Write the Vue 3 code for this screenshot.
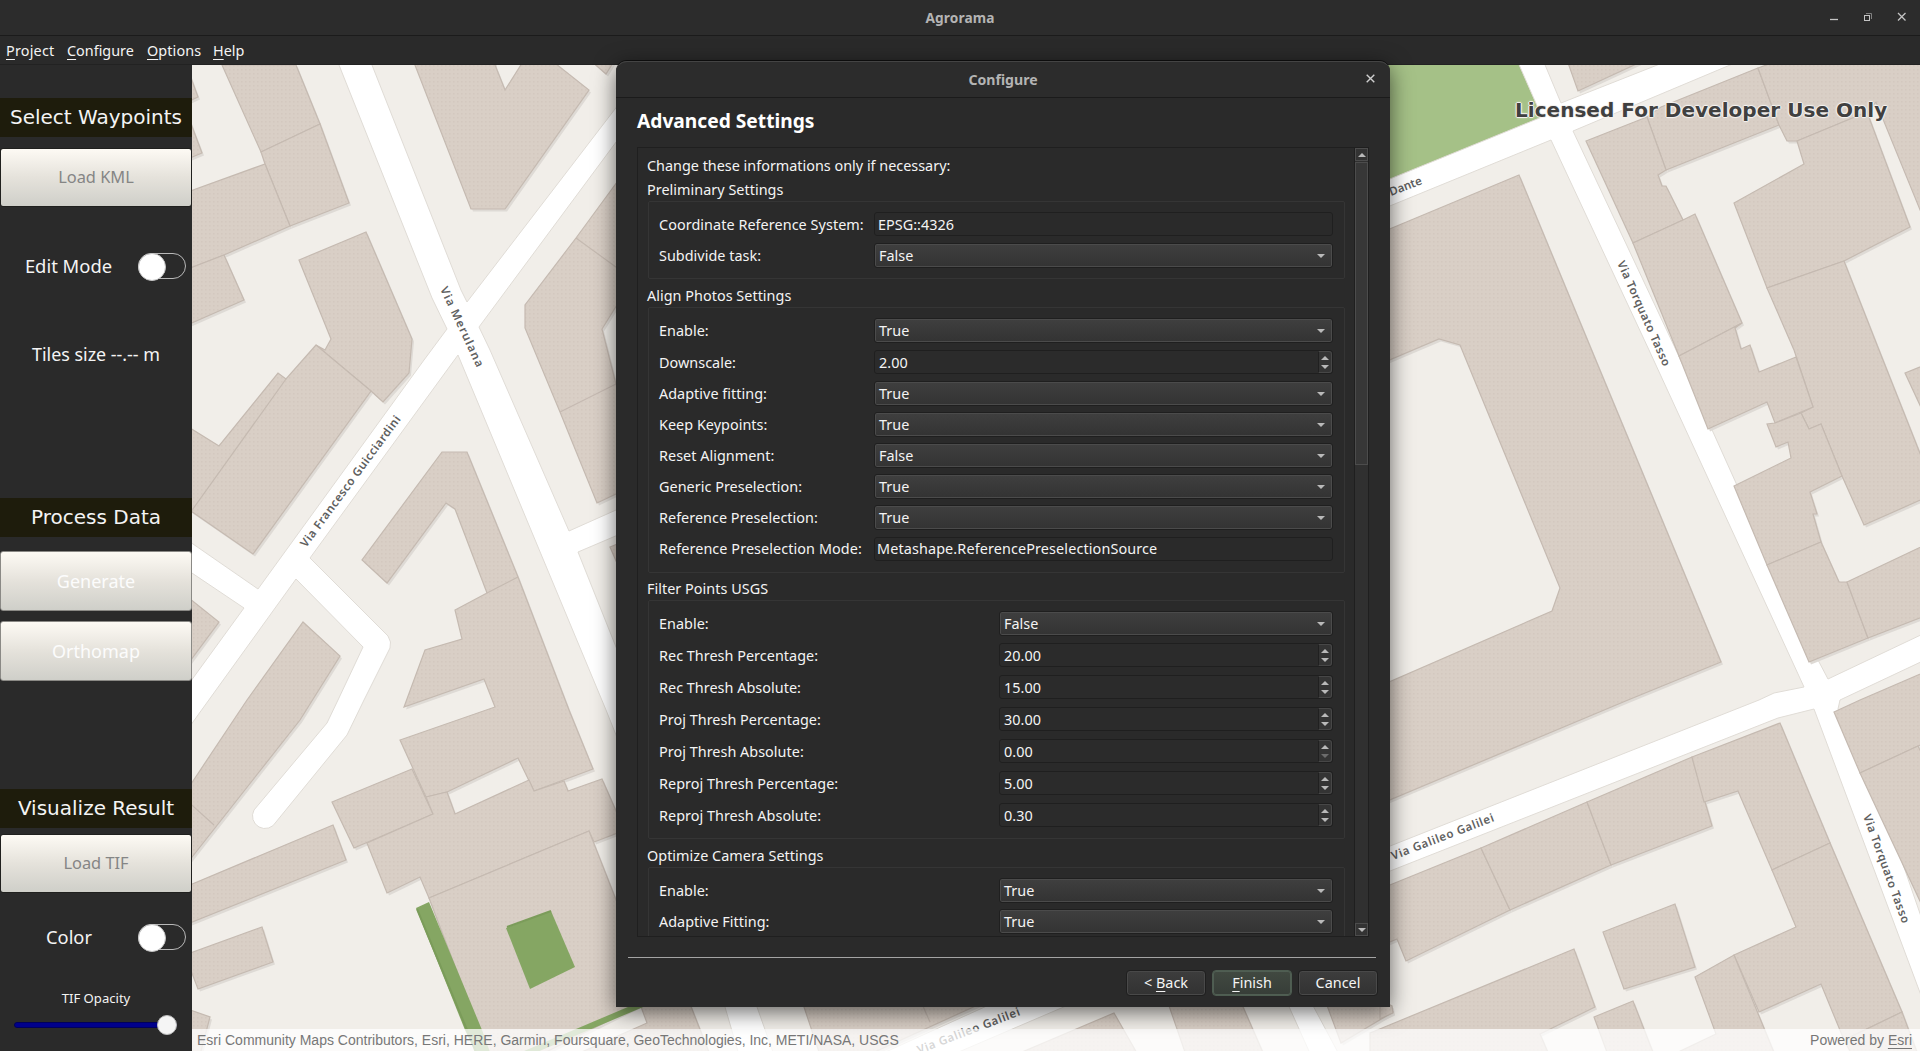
<script setup>
const menus = ['Project', 'Configure', 'Options', 'Help']

const groups = [
  {
    title: 'Preliminary Settings',
    cls: 'prelim',
    rows: [
      { label: 'Coordinate Reference System:', type: 'edit', value: 'EPSG::4326' },
      { label: 'Subdivide task:', type: 'combo', value: 'False' }
    ]
  },
  {
    title: 'Align Photos Settings',
    cls: 'align',
    rows: [
      { label: 'Enable:', type: 'combo', value: 'True' },
      { label: 'Downscale:', type: 'spin', value: '2.00' },
      { label: 'Adaptive fitting:', type: 'combo', value: 'True' },
      { label: 'Keep Keypoints:', type: 'combo', value: 'True' },
      { label: 'Reset Alignment:', type: 'combo', value: 'False' },
      { label: 'Generic Preselection:', type: 'combo', value: 'True' },
      { label: 'Reference Preselection:', type: 'combo', value: 'True' },
      { label: 'Reference Preselection Mode:', type: 'edit', value: 'Metashape.ReferencePreselectionSource' }
    ]
  },
  {
    title: 'Filter Points USGS',
    cls: 'filter',
    rows: [
      { label: 'Enable:', type: 'combo', value: 'False' },
      { label: 'Rec Thresh Percentage:', type: 'spin', value: '20.00' },
      { label: 'Rec Thresh Absolute:', type: 'spin', value: '15.00' },
      { label: 'Proj Thresh Percentage:', type: 'spin', value: '30.00' },
      { label: 'Proj Thresh Absolute:', type: 'spin', value: '0.00', atMin: true },
      { label: 'Reproj Thresh Percentage:', type: 'spin', value: '5.00' },
      { label: 'Reproj Thresh Absolute:', type: 'spin', value: '0.30' }
    ]
  },
  {
    title: 'Optimize Camera Settings',
    cls: 'optimize',
    rows: [
      { label: 'Enable:', type: 'combo', value: 'True' },
      { label: 'Adaptive Fitting:', type: 'combo', value: 'True' }
    ]
  }
]

const buildings = [
  '222,65 296,65 320,124 261,152',
  '320,124 349,203 290,226 265,164 261,152',
  '185,193 265,164 290,226 224,255 185,270',
  '185,270 224,255 244,300 185,326',
  '185,62 198,97 185,103',
  '185,108 202,153 185,160',
  '413,60 495,60 495,65 505,90 524,60 551,60 589,90 505,209 471,209',
  '590,60 606,74 616,58',
  '366,232 412,339 409,373 383,402 371,391 316,345 325,350 331,339 299,260',
  '316,345 286,379 278,373 219,446 185,425 185,507 253,554 371,391',
  '620,178 576,238 525,305 525,328 560,412 597,503 620,492 620,400 602,329 620,300',
  '442,452 467,452 518,577 569,710 593,769 534,791 518,758 447,792 426,797 400,740 495,707 484,679 404,707 425,650 462,639 455,610 487,593 455,509 446,503 387,583 362,560',
  '610,547 620,543 620,570',
  '185,595 219,622 185,668',
  '303,622 340,656 300,720 185,866 185,793 247,700',
  '333,825 346,860 185,925 185,887',
  '262,927 273,962 198,989 185,955',
  '185,1008 210,1017 200,1055 185,1055',
  '412,769 433,814 354,848 332,802',
  '426,797 447,792 455,814 529,780 534,791 564,781 568,791 602,779 620,820 620,832 594,842 589,831 429,898 420,877 387,893 367,843 433,814',
  '429,898 589,831 620,910 650,1000 540,1055 489,1055',
  '640,1004 647,1023 575,1055 710,1055 690,1004',
  '803,1004 820,1055 868,1055 980,1004',
  '1114,1013 1138,1055 1015,1055',
  '1167,1000 1240,1000 1264,1055 1186,1055',
  '1325,1000 1380,1000 1393,1012 1341,1043',
  '1567,60 1578,91 1645,60',
  '1661,107 1758,68 1779,125 1666,170 1647,117',
  '1586,141 1647,117 1666,170 1658,175 1662,186 1666,186 1683,220 1633,243',
  '1633,243 1683,220 1695,214 1742,323 1679,356',
  '1758,68 1780,60 1925,60 1925,222 1876,102 1867,112 1797,141 1787,141 1779,125',
  '1797,141 1867,112 1910,227 1844,261 1767,288 1734,203 1804,164',
  '1767,288 1844,261 1879,350 1925,466 1925,498 1864,525 1842,476 1821,424 1809,429 1801,413 1813,407 1794,350',
  '1679,356 1742,323 1735,328 1741,349 1750,345 1759,372 1796,357 1813,407 1775,423 1767,402 1708,429',
  '1801,413 1809,429 1821,424 1842,476 1810,492 1817,514 1813,514 1821,542 1767,565 1734,486 1791,458 1788,442 1776,447 1767,424 1775,423',
  '1767,565 1821,542 1839,582 1847,582 1868,638 1809,662',
  '1847,582 1925,545 1925,616 1868,638',
  '1905,373 1925,365 1925,416',
  '1380,233 1519,175 1721,662 1628,700 1380,804 1380,686 1552,611 1560,588 1460,345 1439,339 1380,364',
  '1380,889 1481,848 1510,910 1406,961 1397,939 1380,946',
  '1481,848 1587,802 1611,865 1510,910',
  '1587,802 1692,757 1712,826 1611,865',
  '1692,757 1780,723 1830,843 1772,870 1738,791 1704,802',
  '1830,843 1902,1012 1844,1040 1821,984 1759,1012 1734,955 1796,927 1772,870',
  '1695,977 1734,955 1775,1055 1672,1055 1716,1034',
  '1902,1012 1918,1055 1852,1055 1844,1040',
  '1603,932 1675,904 1695,967 1624,989',
  '1594,1017 1633,1001 1654,1055 1608,1055',
  '1370,1033 1574,949 1595,1007 1540,1034 1549,1055 1370,1055',
  '1380,1000 1392,1006 1393,1013 1380,1019',
  '1834,712 1860,700 1925,672 1925,743 1918,746 1860,773',
  '1860,773 1918,746 1925,760 1925,912 1919,899'
]
const walls = [
  'M286,379 L185,520', 'M576,238 L620,270', 'M560,412 L620,382', 'M487,593 L518,577',
  'M185,799 L214,825', 'M922,1004 L930,1022'
]
</script>

<template>
  <div class="app">
    <header class="titlebar">
      <span class="title">Agrorama</span>
      <svg class="winbtns" width="90" height="14" viewBox="0 0 90 14">
        <path d="M0,12.5 H8" class="w1" />
        <rect x="34.5" y="8.5" width="5" height="5" class="w2" />
        <path d="M36,6.5 H41.5 V12" class="w3" />
        <path d="M68,6 L75.500,13.5 M75.500,6 L68,13.5" class="w1" />
      </svg>
    </header>
    <nav class="menubar">
      <span v-for="m in menus" :key="m" :class="['menu', m.toLowerCase()]"><u>{{ m[0] }}</u>{{ m.slice(1) }}</span>
    </nav>

    <div class="main">
      <aside class="panel">
        <h2 class="band b1">Select Waypoints</h2>
        <button class="load l1">Load KML</button>
        <div class="switchrow s1"><span>Edit Mode</span><i class="toggle"></i></div>
        <div class="tiles">Tiles size --.-- m</div>
        <h2 class="band b2">Process Data</h2>
        <button class="proc p1">Generate</button>
        <button class="proc p2">Orthomap</button>
        <h2 class="band b3">Visualize Result</h2>
        <button class="load l2">Load TIF</button>
        <div class="switchrow s2"><span>Color</span><i class="toggle"></i></div>
        <div class="opacity">TIF Opacity</div>
        <div class="slider"><i></i></div>
      </aside>

      <section class="map">
        <svg class="canvas" width="1728" height="986" viewBox="192 65 1728 986">
          <defs>
            <pattern id="dots" width="4" height="4" patternUnits="userSpaceOnUse">
              <rect width="4" height="4" fill="#d9cfc6" />
              <rect x="1" y="1" width="1.500" height="1.500" fill="#d3c8bf" />
            </pattern>
          </defs>
          <rect x="192" y="65" width="1728" height="986" fill="#f1eee9" />
          <polygon points="1380,60 1517,60 1542,117 1380,184" fill="#a5c187" />
          <g class="road">
            <path d="M337,60 L432,298 L447,329 L424,360 L258,589 L180,535 V565 L244,608 L180,696 V740 L296,579 L363,647 L338,700 L327,723 L254,810 A12.500,12.500 0 0 0 276,822 L347,735 L364,700 L390,648 Q392,642 388,636 L310,558 L458,355 L606,710 L725,1007 L739,1055 H774 L757,1007 L616,647 L578,552 L625,532 V506 L569,531 L490,350 L479,327 L625,130 V96 L467,302 L461,290 L370,60 Z" />
            <path d="M1380,183 L1542,117 L1517,60 H1543 L1561,103 L1670,60 H1742 L1573,131 L1676,350 L1736,483 L1767,563 L1828,679 L1925,633 V660 L1840,700 L1838,709 L1897,847 L1925,928 V1006 L1814,709 L1778,718 L1380,875 V850 L1759,700 L1774,693 L1804,687 L1649,350 L1551,140 L1380,210 Z" />
            <path d="M868,1060 L1000,1000 H1080 L940,1060 Z" />
            <path d="M1286,1000 L1313,1060 H1342 L1310,1000 Z" />
          </g>
          <g class="shade" transform="translate(2,2.500)">
            <polygon v-for="(p, i) in buildings" :key="'s' + i" :points="p" />
          </g>
          <g class="houses">
            <polygon v-for="(p, i) in buildings" :key="i" :points="p" fill="url(#dots)" />
            <path v-for="w in walls" :key="w" :d="w" />
          </g>
          <g class="grass">
            <polygon points="416,908 429,902 482,1030 491,1055 477,1055 465,1030" />
            <polygon points="551,911 575,967 530,989 506,928" />
            <path d="M520,1056 L645,1003" />
            <path d="M507,927 L551,911" class="dark" />
            <path d="M417,909 L467,1030 L477,1055" class="dark" />
          </g>
          <g class="names">
            <text transform="translate(440,289) rotate(65)" textLength="87">Via Merulana</text>
            <text transform="translate(306,548) rotate(-53.500)" textLength="160">Via Francesco Guicciardini</text>
            <text transform="translate(1391,196) rotate(-21)" textLength="34">Dante</text>
            <text transform="translate(1617,263) rotate(66)" textLength="114">Via Torquato Tasso</text>
            <text transform="translate(1393,860) rotate(-21)" textLength="109">Via Galileo Galilei</text>
            <text transform="translate(1863,816) rotate(70)" textLength="115">Via Torquato Tasso</text>
            <text transform="translate(919,1054) rotate(-21)" textLength="109">Via Galileo Galilei</text>
          </g>
        </svg>
        <div class="licensed">Licensed For Developer Use Only</div>
        <footer class="attribution">
          <span class="credits">Esri Community Maps Contributors, Esri, HERE, Garmin, Foursquare, GeoTechnologies, Inc, METI/NASA, USGS</span>
          <span>Powered by <u>Esri</u></span>
        </footer>
      </section>
    </div>

    <div class="dialog">
      <header class="dtitle">
        <span>Configure</span>
        <svg class="dclose" width="9" height="9" viewBox="0 0 9 9"><path d="M.7,.7 L8.300,8.300 M8.300,.7 L.7,8.300" /></svg>
      </header>
      <h1>Advanced Settings</h1>
      <div class="scroll">
        <div class="content">
          <p class="hint">Change these informations only if necessary:</p>
          <section v-for="g in groups" :key="g.title" :class="['group', g.cls]">
            <h3>{{ g.title }}</h3>
            <div class="box">
              <div v-for="r in g.rows" :key="r.label" :class="['row', r.type]">
                <label>{{ r.label }}</label>
                <div class="field">
                  <span>{{ r.value }}</span>
                  <svg v-if="r.type === 'combo'" class="arrow" width="8" height="4" viewBox="0 0 8 4"><path d="M0,0 H8 L4,4 Z" /></svg>
                  <div v-if="r.type === 'spin'" class="steps">
                    <svg width="8" height="4" viewBox="0 0 8 4"><path d="M0,4 H8 L4,0 Z" /></svg>
                    <svg width="8" height="4" viewBox="0 0 8 4" :class="{ off: r.atMin }"><path d="M0,0 H8 L4,4 Z" /></svg>
                  </div>
                </div>
              </div>
            </div>
          </section>
        </div>
        <div class="bar">
          <div class="sbtn"><svg width="8" height="4" viewBox="0 0 8 4"><path d="M0,4 H8 L4,0 Z" /></svg></div>
          <div class="handle"></div>
          <div class="sbtn end"><svg width="8" height="4" viewBox="0 0 8 4"><path d="M0,0 H8 L4,4 Z" /></svg></div>
        </div>
      </div>
      <div class="rule"></div>
      <div class="actions">
        <button class="back">&lt; <u>B</u>ack</button>
        <button class="finish"><u>F</u>inish</button>
        <button class="cancel">Cancel</button>
      </div>
    </div>
  </div>
</template>

<style>
body { background: #2a2a2a; }
</style>

<style scoped>
.app {
  position: relative;
  display: flex;
  flex-direction: column;
  width: 1920px;
  height: 1051px;
  overflow: hidden;
  background: #2a2a2a;
  color: #f4f4f4;
  font-family: "Noto Sans", "Open Sans", sans-serif;
  font-size: 14.4px;
}
.app * { box-sizing: border-box; }
h1, h2, h3, p { margin: 0; font-weight: 400; }
button { font-family: inherit; padding: 0; color: inherit; }
u { text-underline-offset: 3px; text-decoration-thickness: 1px; }

.titlebar {
  position: relative;
  flex: none;
  display: flex;
  align-items: center;
  justify-content: center;
  height: 36px;
  background: #2c2c2c;
  border-bottom: 1px solid #1b1b1b;
}
.title { font-weight: 700; font-size: 13.700px; color: #b4b4b4; letter-spacing: .1px; }
.winbtns { position: absolute; left: 1830px; top: 7px; fill: none; stroke: #c4c4c4; }
.w1 { stroke-width: 1.300; }
.w3 { stroke: #808080; }
.menubar { flex: none; height: 29px; border-bottom: 1px solid #222; display: flex; padding-left: 6px; }
.menu { line-height: 30px; }
.menu.project { width: 61px; letter-spacing: .2px; }
.menu.configure { width: 80px; }
.menu.options { width: 66px; letter-spacing: .1px; }

.main { display: flex; height: 986px; }
.panel {
  width: 192px;
  flex: none;
  display: flex;
  flex-direction: column;
  align-items: stretch;
  text-align: center;
  font-size: 17.900px;
}
.band {
  height: 39px;
  background: #1e1c0c;
  font: 20px/39px "DejaVu Sans", sans-serif;
  white-space: nowrap;
  flex: none;
}
.b1 { margin-top: 33px; }
.b2 { margin-top: 127px; }
.b3 { margin-top: 108px; }
.load, .proc {
  flex: none;
  border: 1px solid #20201e;
  background: linear-gradient(#fdfaf4, #e5e2db 50%, #cfcfc9);
  border-radius: 3px;
}
.load { height: 59px; margin-top: 11px; color: #858585; font-size: 16.400px; padding-bottom: 2px; }
.l2 { margin-top: 6px; }
.proc { height: 60px; border-color: #8a8985; color: #fcfcfc; font-size: 18px; }
.p1 { margin-top: 14px; }
.p2 { margin-top: 10px; }
.switchrow { height: 28px; display: flex; align-items: center; padding-right: 6px; }
.switchrow span { flex: 1; padding-bottom: 2px; }
.s1 { margin-top: 45px; }
.s1 span { font-size: 18.400px; padding-right: 1px; }
.s2 { margin-top: 30px; }
.s2 span { font-size: 18.300px; }
.toggle { width: 48px; height: 26px; border: 1px solid #b8b8b8; border-radius: 13px; position: relative; }
.toggle::before {
  content: "";
  position: absolute;
  left: -1px;
  top: -1px;
  width: 26px;
  height: 26px;
  border-radius: 50%;
  background: #fff;
  border: 1px solid #c4c4c4;
}
.tiles { margin-top: 60px; height: 31px; line-height: 28px; }
.opacity { font-size: 13.100px; margin-top: 36px; height: 22px; line-height: 22px; }
.slider { position: relative; flex: none; margin: 13px 15px 0 14px; height: 6px; background: #00008b; border: 1px solid #00005c; border-radius: 3px; }
.slider i { position: absolute; right: -1px; top: -8px; width: 20px; height: 20px; border-radius: 50%; background: #f5f5f5; border: 1px solid #bdbdbd; }

.map { position: relative; width: 1728px; height: 986px; overflow: hidden; }
.canvas { display: block; }
.road { fill: #fff; stroke: #e0dcd6; stroke-width: 1; }
.shade { fill: #dedad5; }
.houses { stroke: #c5bab1; stroke-width: 1.200; fill: none; }
.grass { fill: #85a663; }
.grass path { fill: none; stroke: #85a663; stroke-width: 6; }
.grass .dark { stroke: #7b9c5a; stroke-width: 2; }
.names { font: 600 11.600px "Noto Sans", sans-serif; fill: #606060; }
.licensed {
  position: absolute;
  left: 1323px;
  top: 31px;
  font: 700 20px/28px "DejaVu Sans", sans-serif;
  letter-spacing: .03px;
  color: #404040;
  white-space: nowrap;
  text-shadow: 1px 0 #f4f1ee, -1px 0 #f4f1ee, 0 1px #f4f1ee, 0 -1px #f4f1ee, 0 0 3px #fff;
}
.attribution {
  position: absolute;
  left: 0;
  right: 0;
  bottom: 0;
  height: 22px;
  display: flex;
  justify-content: space-between;
  padding: 0 8px 0 5px;
  background: rgba(255, 255, 255, .75);
  font: 14px/22px "Liberation Sans", sans-serif;
  color: #777;
}

.dialog {
  position: absolute;
  left: 616px;
  top: 61px;
  width: 774px;
  height: 946px;
  background: #2a2a2a;
  border-radius: 11px 11px 0 0;
  box-shadow: 0 -1px 0 0 rgba(0, 0, 0, .6), 0 5px 22px rgba(0, 0, 0, .6);
  display: flex;
  flex-direction: column;
}
.dtitle {
  position: relative;
  height: 37px;
  flex: none;
  display: flex;
  justify-content: center;
  align-items: center;
  background: #2c2c2c;
  border-top: 1px solid #444;
  border-bottom: 1px solid #1b1b1b;
  border-radius: 11px 11px 0 0;
  font-weight: 700;
  font-size: 14.100px;
  color: #b4b4b4;
}
.dclose { position: absolute; left: 750px; top: 12px; fill: none; stroke: #cfcfcf; stroke-width: 1.400; }
.dialog h1 { font-weight: 700; font-size: 19.200px; line-height: 27px; margin: 9px 0 0 21px; height: 40px; color: #fff; }
.scroll { width: 732px; height: 790px; margin-left: 21px; border: 1px solid #1f1f1f; display: flex; overflow: hidden; flex: none; }
.content { width: 717px; padding: 7px 10px 0; overflow: hidden; letter-spacing: .03px; }
.hint { height: 23px; line-height: 22px; margin-left: -1px; letter-spacing: 0; }
.group { width: 697px; }
.group h3 { height: 28px; line-height: 22px; margin-left: -1px; font-size: inherit; white-space: nowrap; }
.group.prelim h3 { height: 23px; padding-top: 1px; }
.group.align h3 { padding-top: 6px; }
.group.filter h3 { padding-top: 5px; height: 27px; }
.group.optimize h3 { padding-top: 6px; }
.box { border: 1px solid #353535; border-radius: 2px; padding: 10px 11px 10px 10px; display: flex; flex-direction: column; gap: 6px; }
.prelim .box { padding-top: 9px; }
.row { display: flex; align-items: stretch; height: 25px; }
.row.spin, .row.edit { height: 26px; }
.row label { width: 215px; line-height: 25px; white-space: nowrap; }
.row.spin label, .row.edit label { line-height: 27px; }
.align .row.edit label { line-height: 25px; letter-spacing: .08px; }
.prelim .row.edit label { letter-spacing: .06px; }
.filter .row label, .optimize .row label { width: 340px; }
.field { flex: 1; display: flex; align-items: center; border: 1px solid #1f1f1f; border-radius: 3px; padding-left: 4px; white-space: nowrap; }
.combo .field {
  background: linear-gradient(#3f3f3f, #333);
  box-shadow: inset 0 0 0 1px #4b4b4b;
  justify-content: space-between;
  padding-right: 7px;
}
.field span { line-height: 22px; }
.spin .field, .edit .field { margin: 1px 0; }
.spin .field span, .edit .field span { padding-top: 1px; }
.edit .field { padding-left: 2px; }
.align .edit .field span { padding: 0 0 1px; letter-spacing: .12px; }
.prelim .edit .field { padding-left: 3px; }
.arrow, .steps svg, .sbtn svg { fill: #b9b9b9; display: block; }
.spin .field { justify-content: space-between; background: #2b2b2b; }
.steps { width: 14px; height: 22px; background: #343434; border: 1px solid #474747; border-left-color: #202020; border-radius: 0 3px 3px 0; display: flex; flex-direction: column; align-items: center; justify-content: center; gap: 5px; }
.steps svg.off { fill: #6c6c6c; }

.bar { width: 14px; background: #303030; border-left: 1px solid #1f1f1f; display: flex; flex-direction: column; }
.sbtn { height: 13px; flex: none; border: 1px solid #4c4c4c; background: #333; display: flex; align-items: center; justify-content: center; }
.handle { height: 303px; margin-top: 1px; border: 1px solid #4c4c4c; background: #373737; }
.sbtn.end { margin-top: auto; }

.rule { height: 1px; background: #a4a4a4; margin: 20px 14px 0 12px; flex: none; }
.actions { display: flex; justify-content: flex-end; gap: 6px; margin-top: 12px; padding-right: 12px; }
.actions button { height: 26px; width: 80px; padding-bottom: 2px; border: 1px solid #1f1f1f; border-radius: 4px; background: linear-gradient(#3d3d3d, #323232); box-shadow: inset 0 0 0 1px #494949; font-size: 14.400px; }
.actions .finish { background: linear-gradient(#414941, #373d38); border-color: #4d5c50; box-shadow: inset 0 0 0 1px #505e53; }
</style>
